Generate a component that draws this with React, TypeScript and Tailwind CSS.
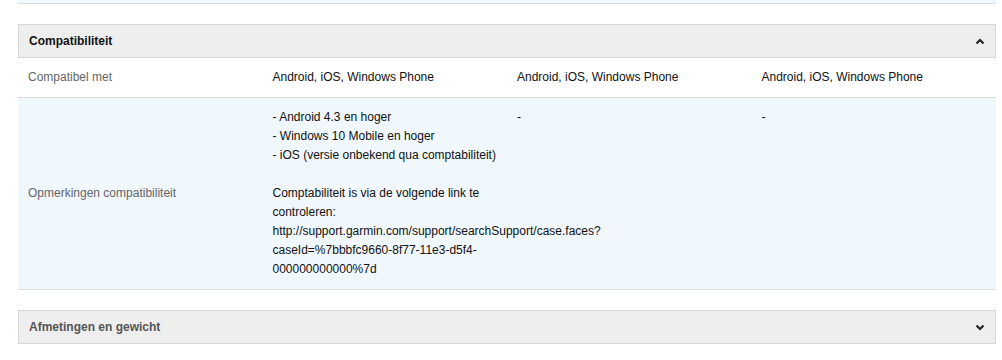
const Chevron = ({ up }: { up?: boolean }) => (
  <svg width="10" height="7" viewBox="0 0 10 7" className="text-[#222]">
    <polyline
      points={up ? '1.5,5.5 5,2 8.5,5.5' : '1.5,1.5 5,5 8.5,1.5'}
      fill="none"
      stroke="currentColor"
      strokeWidth="2.2"
    />
  </svg>
);

const rows = [
  {
    label: 'Compatibel met',
    values: [['Android, iOS, Windows Phone'], ['Android, iOS, Windows Phone'], ['Android, iOS, Windows Phone']],
  },
  {
    label: 'Opmerkingen compatibiliteit',
    values: [
      [
        '- Android 4.3 en hoger',
        '- Windows 10 Mobile en hoger',
        '- iOS (versie onbekend qua comptabiliteit)',
        '',
        'Comptabiliteit is via de volgende link te',
        'controleren:',
        'http://support.garmin.com/support/searchSupport/case.faces?',
        'caseId=%7bbbfc9660-8f77-11e3-d5f4-',
        '000000000000%7d',
      ],
      ['-'],
      ['-'],
    ],
  },
];

export default function App() {
  return (
    <div className="w-[1002px] h-[360px] bg-white overflow-hidden font-['Liberation_Sans',Arial,sans-serif] text-[12px] leading-[19px] text-[#111]">
      <div className="mx-[18px] w-[978px]">
        {/* previous section tail */}
        <div className="h-[4px] bg-[#f0f7fd] border-b border-[#dcdcdc]" />

        {/* Compatibiliteit */}
        <div className="mt-[20px]">
          <div className="h-[34px] flex items-center justify-between px-[10px] bg-[#eeeeee] border border-[#d8d8d8]">
            <span className="font-bold text-[#111]">Compatibiliteit</span>
            <Chevron up />
          </div>
          {rows.map((row, i) => (
            <div
              key={row.label}
              className={`grid grid-cols-4 border-b border-[#dcdcdc] ${i % 2 === 1 ? 'bg-[#f0f7fd]' : 'bg-white'}`}
            >
              <div className="px-[10px] py-[10px] flex items-center text-[#666]">{row.label}</div>
              {row.values.map((lines, j) => (
                <div key={j} className="px-[10px] py-[10px] min-w-0">
                  {lines.map((l, k) => (
                    <div key={k} className={l === '' ? 'h-[19px]' : 'whitespace-nowrap'}>
                      {l}
                    </div>
                  ))}
                </div>
              ))}
            </div>
          ))}
        </div>

        {/* Afmetingen en gewicht */}
        <div className="mt-[20px] h-[34px] flex items-center justify-between px-[10px] bg-[#eeeeee] border border-[#d8d8d8]">
          <span className="font-bold text-[#555]">Afmetingen en gewicht</span>
          <Chevron />
        </div>
      </div>
    </div>
  );
}
